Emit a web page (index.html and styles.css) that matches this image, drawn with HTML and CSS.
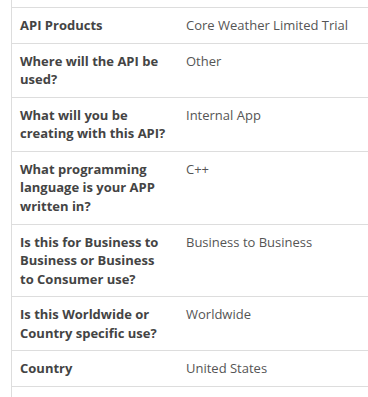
FILE: index.html
```html
<!DOCTYPE html>
<html lang="en">
<head>
    <meta charset="UTF-8">
    <meta name="viewport" content="width=device-width, initial-scale=1.0">
    <title>Subscription Details</title>
    <link rel="stylesheet" href="styles.css">
</head>
<body>
    <div class="panel">
        <table class="details">
            <tbody>
                <tr>
                    <th>API Products</th>
                    <td>Core Weather Limited Trial</td>
                </tr>
                <tr>
                    <th>Where will the API be used?</th>
                    <td>Other</td>
                </tr>
                <tr>
                    <th>What will you be creating with this API?</th>
                    <td>Internal App</td>
                </tr>
                <tr>
                    <th>What programming language is your APP written in?</th>
                    <td>C++</td>
                </tr>
                <tr>
                    <th>Is this for Business to Business or Business to Consumer use?</th>
                    <td>Business to Business</td>
                </tr>
                <tr>
                    <th>Is this Worldwide or Country specific use?</th>
                    <td>Worldwide</td>
                </tr>
                <tr>
                    <th>Country</th>
                    <td>United States</td>
                </tr>
            </tbody>
        </table>
    </div>
</body>
</html>
```

FILE: styles.css
```css
* {
    margin: 0;
    padding: 0;
    box-sizing: border-box;
}

body {
    font-family: "Open Sans", "Liberation Sans", sans-serif;
    font-size: 13px;
    line-height: 1.42857;
    color: #444;
    background: white;
    overflow: hidden;
}

.panel {
    margin-left: 11px;
    padding-top: 7px;
    border-left: 1px solid #ddd;
    height: 397px;
}

.details {
    width: 100%;
    border-collapse: collapse;
    border-spacing: 0;
    border-bottom: 1px solid #ddd;
}

.details th,
.details td {
    padding: 8px;
    border-top: 1px solid #ddd;
    text-align: left;
    vertical-align: top;
}

.details th {
    width: 166px;
    font-weight: 700;
    color: #444;
}

.details td {
    font-weight: 400;
    color: #555;
}
```
